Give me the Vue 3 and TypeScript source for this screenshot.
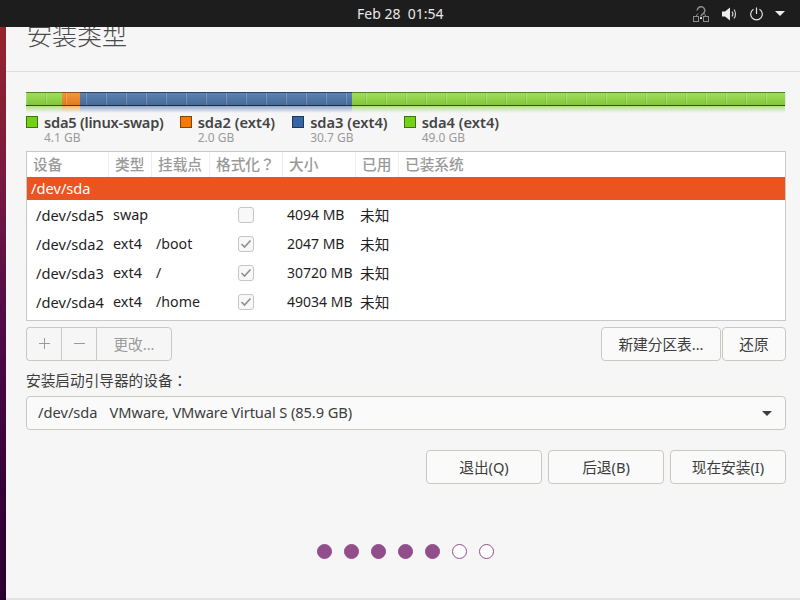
<script setup lang="ts">
interface Segment {
  name: string
  size: string
  color: string
  fill: string
  width: number
}

interface PartitionRow {
  device: string
  type: string
  mount: string
  format: boolean
  size: string
}

const segments: Segment[] = [
  { name: 'sda5 (linux-swap)', size: '4.1 GB', color: '#73d216', fill: '#94dc46', width: 36 },
  { name: 'sda2 (ext4)', size: '2.0 GB', color: '#f57900', fill: '#f68b28', width: 18 },
  { name: 'sda3 (ext4)', size: '30.7 GB', color: '#3465a4', fill: '#4f77a9', width: 272 },
  { name: 'sda4 (ext4)', size: '49.0 GB', color: '#73d216', fill: '#94dc46', width: 433 }
]

const columns = [
  { label: '设备', width: 82 },
  { label: '类型', width: 43 },
  { label: '挂载点', width: 58 },
  { label: '格式化？', width: 73 },
  { label: '大小', width: 73 },
  { label: '已用', width: 43 },
  { label: '已装系统', width: 386 }
]

const rows: PartitionRow[] = [
  { device: '/dev/sda5', type: 'swap', mount: '', format: false, size: '4094 MB' },
  { device: '/dev/sda2', type: 'ext4', mount: '/boot', format: true, size: '2047 MB' },
  { device: '/dev/sda3', type: 'ext4', mount: '/', format: true, size: '30720 MB' },
  { device: '/dev/sda4', type: 'ext4', mount: '/home', format: true, size: '49034 MB' }
]

const steps = [true, true, true, true, true, false, false]
</script>

<template>
  <div class="screen">
    <header class="topbar">
      <span class="clock">Feb 28&nbsp;&nbsp;01:54</span>
      <div class="tray">
        <svg width="16" height="16" viewBox="0 0 16 16" fill="none">
          <path d="M4.200 4.500a3.800 3.800 0 1 1 6 3.100c-1.300.9-2.200 1.500-2.200 3" stroke="#8c8c8c" stroke-width="1.500" />
          <rect x="7" y="11.200" width="2" height="1.800" fill="#e8e8e8" />
          <path d="M5 7.500 2.800 10.500M11 7.500l2.200 3" stroke="#8c8c8c" stroke-width="1" />
          <rect x="0.500" y="10.500" width="5" height="5" stroke="#8c8c8c" />
          <rect x="10.500" y="10.500" width="5" height="5" stroke="#8c8c8c" />
        </svg>
        <svg width="15" height="14" viewBox="0 0 15 14" fill="none">
          <path d="M0 4.500h3L8 .5v13l-5-4H0z" fill="#eeeeee" />
          <path d="M10 4.500c1 1.400 1 3.600 0 5M12 2.500c2 2.500 2 6.500 0 9" stroke="#cfcfcf" stroke-width="1.200" />
        </svg>
        <svg width="13" height="14" viewBox="0 0 13 14" fill="none">
          <path d="M3.500 2.200a5.800 5.800 0 1 0 6 0M6.500 0.500v6.500" stroke="#e4e4e4" stroke-width="1.200" />
        </svg>
        <span class="tray-caret"></span>
      </div>
    </header>

    <div class="desktop">
      <div class="wallpaper"></div>
      <main class="window">
        <div class="title-area">
          <h1 class="title">安装类型</h1>
        </div>

        <section class="content">
          <div class="bar-wrap">
            <div class="bar">
              <div
                v-for="seg in segments"
                :key="seg.name"
                class="bar-seg"
                :style="{ width: seg.width + 'px', backgroundColor: seg.fill }"
              ></div>
            </div>
            <div class="reflection">
              <div
                v-for="seg in segments"
                :key="seg.name"
                class="reflection-seg"
                :style="{ width: seg.width + 'px', backgroundColor: seg.color }"
              ></div>
            </div>
          </div>

          <ul class="legend">
            <li v-for="seg in segments" :key="seg.name" class="legend-item">
              <span class="swatch" :style="{ backgroundColor: seg.color }"></span>
              <div>
                <div class="legend-name">{{ seg.name }}</div>
                <div class="legend-size">{{ seg.size }}</div>
              </div>
            </li>
          </ul>

          <div class="table">
            <div class="thead">
              <div v-for="col in columns" :key="col.label" class="th" :style="{ width: col.width + 'px' }">
                {{ col.label }}
              </div>
            </div>
            <div class="disk-row">/dev/sda</div>
            <div v-for="row in rows" :key="row.device" class="tr">
              <div class="td td-device">{{ row.device }}</div>
              <div class="td td-type">{{ row.type }}</div>
              <div class="td td-mount">{{ row.mount }}</div>
              <div class="td td-format">
                <span class="check">
                  <svg v-if="row.format" width="12" height="10" viewBox="0 0 12 10" fill="none">
                    <path d="M1.500 5 4.500 8 10.500 1.500" stroke="#8f8f8f" stroke-width="1.600" />
                  </svg>
                </span>
              </div>
              <div class="td td-size">{{ row.size }}</div>
              <div class="td td-used">未知</div>
            </div>
          </div>

          <div class="toolbar">
            <div class="btn-group">
              <button class="btn btn-icon" disabled aria-label="add">
                <svg width="11" height="11" viewBox="0 0 11 11"><path d="M5.500 0v11M0 5.500h11" stroke="#9a9a9a" /></svg>
              </button>
              <button class="btn btn-icon" disabled aria-label="remove">
                <svg width="11" height="11" viewBox="0 0 11 11"><path d="M0 5.500h11" stroke="#9a9a9a" /></svg>
              </button>
              <button class="btn btn-change" disabled>更改...</button>
            </div>
            <div class="toolbar-right">
              <button class="btn btn-table">新建分区表...</button>
              <button class="btn btn-revert">还原</button>
            </div>
          </div>

          <label class="boot-label">安装启动引导器的设备：</label>
          <div class="combo">
            <div class="combo-text">
              <span>/dev/sda</span>
              <span class="combo-model">VMware, VMware Virtual S (85.9 GB)</span>
            </div>
            <span class="combo-caret"></span>
          </div>

          <div class="actions">
            <button class="btn btn-action">退出(Q)</button>
            <button class="btn btn-action">后退(B)</button>
            <button class="btn btn-action">现在安装(I)</button>
          </div>

          <div class="steps">
            <span v-for="(done, i) in steps" :key="i" class="dot" :class="{ done }"></span>
          </div>
        </section>
      </main>
    </div>
  </div>
</template>

<style>
html,
body {
  margin: 0;
  overflow: hidden;
}
</style>

<style scoped>
.screen {
  width: 800px;
  height: 600px;
  display: flex;
  flex-direction: column;
  overflow: hidden;
  font-family: "Noto Sans", "Noto Sans CJK JP", sans-serif;
  font-size: 14.67px;
  color: #3d3d3d;
  background: #f6f6f6;
}

.topbar {
  position: relative;
  z-index: 1;
  flex: 0 0 27px;
  display: flex;
  align-items: center;
  justify-content: flex-end;
  background: #1d1d1d;
  color: #e8e8e8;
}

.clock {
  position: absolute;
  left: 357px;
  top: 4px;
  font-size: 14px;
  line-height: 19px;
  white-space: nowrap;
}

.tray {
  display: flex;
  align-items: center;
  gap: 13px;
  padding-right: 15px;
}

.tray-caret {
  width: 0;
  height: 0;
  margin-left: -1px;
  border-left: 5px solid transparent;
  border-right: 5px solid transparent;
  border-top: 5px solid #eeeeee;
}

.desktop {
  flex: 1;
  display: flex;
  min-height: 0;
}

.wallpaper {
  flex: 0 0 6px;
  background: linear-gradient(180deg, #96232d 0%, #7a1a3e 25%, #520b47 50%, #350039 80%, #2a0030 100%);
}

.window {
  flex: 1;
  display: flex;
  flex-direction: column;
  border-bottom: 2px solid #e2e2e2;
  min-width: 0;
}

.title-area {
  height: 44px;
  flex: 0 0 auto;
  overflow: hidden;
  border-bottom: 1px solid #dedede;
  padding-left: 21px;
}

.title {
  margin: -11px 0 0;
  font-size: 25px;
  font-weight: 300;
  line-height: 36px;
  color: #4a4a4a;
  font-family: "Noto Sans CJK JP", sans-serif;
}

.content {
  flex: 1;
  display: flex;
  flex-direction: column;
  padding: 20px 14px 0 20px;
  min-height: 0;
}

.bar {
  display: flex;
  height: 14px;
  position: relative;
}

.bar-seg {
  height: 14px;
  box-sizing: border-box;
  border-top: 1px solid rgba(0, 0, 0, 0.35);
  border-bottom: 1px solid rgba(0, 0, 0, 0.65);
  background-image: linear-gradient(180deg, rgba(255, 255, 255, 0.08), rgba(0, 0, 0, 0.1));
}

.bar::after {
  content: "";
  position: absolute;
  inset: 1px 0;
  background: linear-gradient(90deg, rgba(255, 255, 255, 0.2) 1px, transparent 1px, transparent 19px, rgba(0, 0, 0, 0.07) 19px) 0 0 / 20px 100%;
}

.reflection {
  display: flex;
  height: 7px;
}

.reflection-seg {
  height: 7px;
  -webkit-mask-image: linear-gradient(180deg, rgba(0, 0, 0, 0.55), transparent);
  mask-image: linear-gradient(180deg, rgba(0, 0, 0, 0.55), transparent);
}

.legend {
  display: flex;
  list-style: none;
  margin: 0;
  padding: 0;
  height: 38px;
  gap: 16px;
}

.legend-item {
  display: flex;
  gap: 6px;
}

.legend-item:first-child .legend-name {
  letter-spacing: -0.24px;
}

.legend-item:nth-child(2) {
  margin-right: 1px;
}

.swatch {
  box-sizing: border-box;
  flex: 0 0 12px;
  width: 12px;
  height: 12px;
  margin-top: 3px;
  border: 1px solid rgba(0, 0, 0, 0.45);
}

.legend-name {
  font-size: 14.67px;
  font-weight: 600;
  line-height: 18px;
  color: #444444;
  white-space: nowrap;
}

.legend-size {
  font-size: 12px;
  line-height: 13px;
  color: #9a9a9a;
}

.table {
  height: 170px;
  box-sizing: border-box;
  border: 1px solid #c8c8c8;
  background: #ffffff;
  color: #1f1f1f;
}

.thead {
  display: flex;
  height: 25px;
}

.th {
  box-sizing: border-box;
  padding-left: 6px;
  border-right: 1px solid #eeeeee;
  font-weight: 500;
  line-height: 24px;
  color: #9a9a9a;
  white-space: nowrap;
}

.th:last-child {
  border-right: 0;
}

.disk-row {
  height: 23px;
  padding-left: 4px;
  background: #e95420;
  color: #ffffff;
  line-height: 23px;
}

.tr {
  display: flex;
  height: 29px;
  align-items: center;
}

.td {
  box-sizing: border-box;
  white-space: nowrap;
}

.td-device {
  width: 86px;
  padding-left: 9px;
}

.td-type {
  width: 43px;
  font-size: 14.400px;
}

.td-mount {
  width: 70px;
  font-size: 14.200px;
}

.td-format {
  width: 61px;
  display: flex;
}

.check {
  box-sizing: border-box;
  width: 16px;
  height: 16px;
  margin-left: 12px;
  display: flex;
  align-items: center;
  justify-content: center;
  border: 1px solid #c6c6c6;
  border-radius: 3px;
  background: #f8f8f8;
}

.td-size {
  width: 73px;
  font-size: 14px;
}

.btn {
  box-sizing: border-box;
  height: 34px;
  padding: 0 0 2px;
  border: 1px solid #cdc7c2;
  border-radius: 4px;
  background: #fafafa;
  color: #3d3d3d;
  font-family: inherit;
  font-size: 14.67px;
}

.toolbar {
  display: flex;
  justify-content: space-between;
  margin-top: 6px;
}

.btn-group {
  display: flex;
}

.btn-group .btn {
  background: #f6f6f6;
  color: #9a9a9a;
  border-radius: 0;
  border-right: 0;
}

.btn-group .btn:first-child {
  border-radius: 4px 0 0 4px;
}

.btn-group .btn:last-child {
  border-right: 1px solid #cdc7c2;
  border-radius: 0 4px 4px 0;
}

.btn-icon {
  width: 35px;
  display: flex;
  align-items: center;
  justify-content: center;
}

.btn-change {
  width: 76px;
}

.toolbar-right {
  display: flex;
  gap: 1px;
}

.btn-table {
  width: 120px;
}

.btn-revert {
  width: 64px;
}

.boot-label {
  margin-top: 9px;
  line-height: 20px;
  height: 20px;
}

.combo {
  box-sizing: border-box;
  height: 34px;
  margin-top: 6px;
  display: flex;
  align-items: center;
  justify-content: space-between;
  padding: 0 13px 0 11px;
  border: 1px solid #cdc7c2;
  border-radius: 4px;
  background: #fafafa;
}

.combo-text {
  display: flex;
  gap: 12px;
  padding-bottom: 2px;
  white-space: nowrap;
}

.combo-model {
  letter-spacing: -0.1px;
}

.combo-caret {
  width: 0;
  height: 0;
  border-left: 5px solid transparent;
  border-right: 5px solid transparent;
  border-top: 5px solid #3d3d3d;
}

.actions {
  display: flex;
  justify-content: flex-end;
  gap: 6px;
  margin-top: 20px;
}

.btn-action {
  width: 116px;
}

.steps {
  display: flex;
  justify-content: center;
  gap: 12px;
  margin-top: 60px;
  padding-right: 2px;
}

.dot {
  box-sizing: border-box;
  width: 15px;
  height: 15px;
  border: 1px solid #924d8b;
  border-radius: 50%;
  background: #ffffff;
}

.dot.done {
  background: #924d8b;
}
</style>
